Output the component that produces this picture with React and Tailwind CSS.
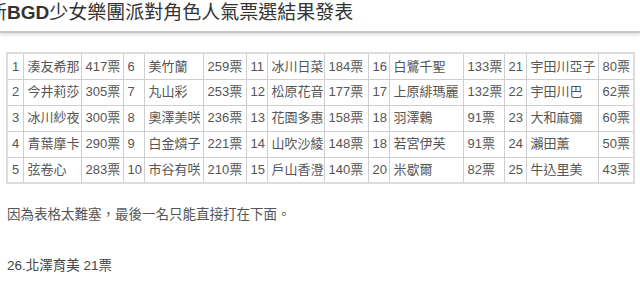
const rows = [
  [['1', '湊友希那', '417票'], ['6', '美竹蘭', '259票'], ['11', '冰川日菜', '184票'], ['16', '白鷺千聖', '133票'], ['21', '宇田川亞子', '80票']],
  [['2', '今井莉莎', '305票'], ['7', '丸山彩', '253票'], ['12', '松原花音', '177票'], ['17', '上原緋瑪麗', '132票'], ['22', '宇田川巴', '62票']],
  [['3', '冰川紗夜', '300票'], ['8', '奧澤美咲', '236票'], ['13', '花園多惠', '158票'], ['18', '羽澤鶇', '91票'], ['23', '大和麻彌', '60票']],
  [['4', '青葉摩卡', '290票'], ['9', '白金燐子', '221票'], ['14', '山吹沙綾', '148票'], ['18', '若宮伊芙', '91票'], ['24', '瀨田薰', '50票']],
  [['5', '弦卷心', '283票'], ['10', '市谷有咲', '210票'], ['15', '戶山香澄', '140票'], ['20', '米歇爾', '82票'], ['25', '牛込里美', '43票']],
]

export default function App() {
  return (
    <div className="w-[640px] h-[293px] overflow-hidden bg-white font-['Liberation_Sans','Noto_Sans_CJK_TC',sans-serif]">
      <header className="h-[33px] border-b-2 border-[#c4c4c4] shadow-[0_2px_3px_rgba(0,0,0,0.12)] overflow-hidden">
        <h1 className="-ml-[12px] pt-[2px] text-[19px] leading-[22px] text-[#333] whitespace-nowrap">
          新<span className="font-bold">BGD</span>少女樂團派對角色人氣票選結果發表
        </h1>
      </header>

      <div className="pl-[6px] pt-[19px]">
        <table className="table-fixed border-collapse border-2 border-[#dcdcdc] text-[13px] text-[#555] w-[627px]">
          <colgroup>
            <col className="w-[16px]" />
            <col className="w-[58px]" />
            <col className="w-[42px]" />
            <col className="w-[21px]" />
            <col className="w-[59px]" />
            <col className="w-[43px]" />
            <col className="w-[21px]" />
            <col className="w-[57px]" />
            <col className="w-[44px]" />
            <col className="w-[21px]" />
            <col className="w-[74px]" />
            <col className="w-[41px]" />
            <col className="w-[22px]" />
            <col className="w-[72px]" />
            <col className="w-[36px]" />
          </colgroup>
          <tbody>
            {rows.map((row, i) => (
              <tr key={i} className="h-[26px]">
                {row.flatMap((cell, j) =>
                  cell.map((txt, k) => (
                    <td key={`${j}-${k}`} className="border border-[#cfcfcf] pl-[4px] pr-[1px] whitespace-nowrap overflow-hidden">
                      {txt}
                    </td>
                  ))
                )}
              </tr>
            ))}
          </tbody>
        </table>
      </div>

      <p className="pl-[7px] mt-[21px] text-[13.5px] text-[#555]">因為表格太難塞，最後一名只能直接打在下面。</p>
      <p className="pl-[7px] mt-[31px] text-[13.5px] text-[#444]">26.北澤育美 21票</p>
    </div>
  )
}
